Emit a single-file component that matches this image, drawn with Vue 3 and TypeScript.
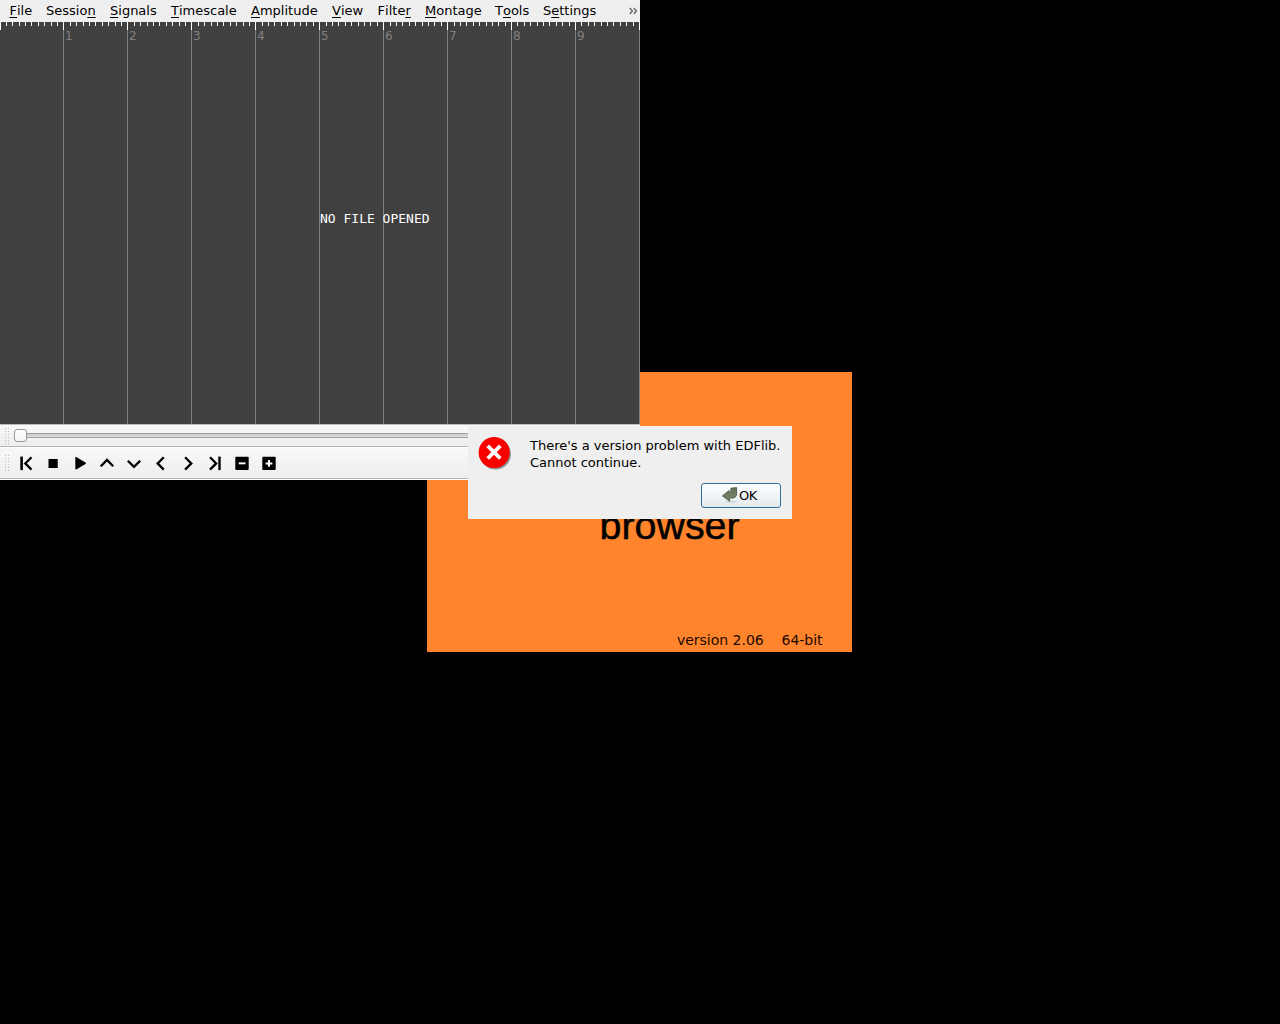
<script setup lang="ts">
interface MenuEntry {
  before: string
  key: string
  after: string
  width: number
}

const menus: MenuEntry[] = [
  { before: '', key: 'F', after: 'ile', width: 36.5 },
  { before: 'Sessio', key: 'n', after: '', width: 64 },
  { before: '', key: 'S', after: 'ignals', width: 61 },
  { before: '', key: 'T', after: 'imescale', width: 80 },
  { before: '', key: 'A', after: 'mplitude', width: 81 },
  { before: '', key: 'V', after: 'iew', width: 45.6 },
  { before: 'Filte', key: 'r', after: '', width: 47.4 },
  { before: '', key: 'M', after: 'ontage', width: 70 },
  { before: 'T', key: 'o', after: 'ols', width: 48 },
  { before: 'S', key: 'e', after: 'ttings', width: 60 },
]

const ticks = Array.from({ length: 101 }, (_, i) => ({
  x: Math.floor(i * 6.395),
  major: i % 10 === 0,
}))
const seconds = Array.from({ length: 9 }, (_, i) => i + 1)

const chevrons = [
  { name: 'up', d: 'M100.8 19.1l6.2-6.2 6.2 6.2' },
  { name: 'down', d: 'M127.8 13.6l6.2 6.2 6.2-6.2' },
  { name: 'previous', d: 'M163.8 10.1l-6.2 6.2 6.2 6.2' },
  { name: 'next', d: 'M185.1 10.1l6.2 6.2-6.2 6.2' },
]
</script>

<template>
  <main class="desktop">
    <section class="splash">
      <div class="brand">browser</div>
      <footer class="version"><span>version 2.06</span><span>64-bit</span></footer>
    </section>

    <section class="window">
      <nav class="menubar">
        <span v-for="m in menus" :key="m.key + m.after" class="menu" :style="{ width: m.width + 'px' }">{{ m.before }}<u>{{ m.key }}</u>{{ m.after }}</span>
        <svg class="more" width="9" height="17" viewBox="0 0 9 17">
          <path d="M.8 6l2.6 3-2.6 3M4.8 6l2.6 3-2.6 3" />
        </svg>
      </nav>

      <svg class="canvas" width="640" height="402" viewBox="0 0 640 402" shape-rendering="crispEdges">
        <rect width="640" height="402" fill="#404040" />
        <rect v-for="s in 10" :key="'g' + s" :x="s * 64 - 1" y="0" width="1" height="402" fill="#808080" />
        <rect v-for="t in ticks" :key="t.x" :x="t.x" y="0" width="1" :height="t.major ? 8 : 4" fill="#fff" />
        <text v-for="s in seconds" :key="s" class="second" :x="s * 64 + 1" y="18">{{ s }}</text>
        <text class="notice" x="320" y="201">NO FILE OPENED</text>
      </svg>

      <div class="toolbar position">
        <i class="grip"></i>
        <div class="slider"><b class="knob"></b></div>
      </div>
      <div class="toolbar playback">
        <i class="grip"></i>
        <svg class="controls" width="300" height="30" viewBox="0 0 300 30">
          <g transform="translate(0 -.9)">
            <rect x="20.3" y="9.5" width="2.6" height="13.5" />
            <path class="stroke" d="M31.5 10.1l-6.2 6.2 6.2 6.2" />
            <rect x="48.5" y="11.9" width="9.2" height="9" />
            <path d="M75.3 10.1l1-.1 9.6 5.7v1l-9.6 5.7-1-.2z" />
            <path v-for="c in chevrons" :key="c.name" class="stroke" :d="c.d" />
            <path class="stroke" d="M210 10.1l6.2 6.2-6.2 6.2" />
            <rect x="218.3" y="9.5" width="2.4" height="13.5" />
            <rect x="235.3" y="9.6" width="13.4" height="13.4" rx="1" />
            <rect x="238.7" y="15.3" width="6.8" height="1.9" fill="#fff" />
            <rect x="262.3" y="9.6" width="13.4" height="13.4" rx="1" />
            <path d="M268 12.9h2v2.4h2.4v2H270v2.4h-2v-2.4h-2.4v-2h2.4z" fill="#fff" />
          </g>
        </svg>
      </div>
    </section>

    <section class="dialog">
      <svg class="critical" width="36" height="36" viewBox="0 0 36 36">
        <circle cx="17.6" cy="17.2" r="15.4" fill="#8c9494" />
        <circle cx="16.2" cy="15.5" r="15.6" fill="#f80000" />
        <path d="M9.7 8.9l12.6 12.6M22.3 8.9L9.7 21.5" stroke="#fff" stroke-width="3.8" />
      </svg>
      <p class="message">There's a version problem with EDFlib.<br />Cannot continue.</p>
      <button class="ok">
        <svg width="17" height="17" viewBox="0 0 17 17">
          <defs>
            <linearGradient id="arrow" x1="0" y1="0" x2="0" y2="1">
              <stop offset="0" stop-color="#65735c" />
              <stop offset="1" stop-color="#748568" />
            </linearGradient>
          </defs>
          <ellipse cx="9" cy="14.6" rx="6" ry="1" fill="#cbd0cc" />
          <path d="M8.9 1.2l5.7-.6v6.2c0 2.8-1.7 4.3-4.7 4.3H7.2l.3 3L.4 8.9l6.8-5.4v2.4c1.2 0 1.7-.5 1.7-1.6z" fill="url(#arrow)" stroke="#424b3e" stroke-width=".8" />
        </svg>
        <span>OK</span>
      </button>
    </section>
  </main>
</template>

<style>
body {
  background: #000;
}
</style>

<style scoped>
.desktop {
  position: relative;
  width: 1280px;
  height: 1024px;
  overflow: hidden;
  background: #000;
  color: #000;
  font: 13px/17px "DejaVu Sans", sans-serif;
}
.splash {
  position: absolute;
  left: 427px;
  top: 372px;
  width: 425px;
  height: 280px;
  background: #ff842b;
  display: flex;
  flex-direction: column;
  justify-content: space-between;
  box-sizing: border-box;
  padding: 130px 29px 3px 172.5px;
}
.brand {
  font: 39.4px/46px "Liberation Sans", Arial, sans-serif;
  -webkit-text-stroke: 0.5px #000;
}
.version {
  display: flex;
  justify-content: flex-end;
  gap: 17.7px;
  margin-right: 0.4px;
  font-size: 14px;
  line-height: 18px;
  color: #1c0800;
}
.window {
  position: absolute;
  left: 0;
  top: 0;
  width: 640px;
  height: 480px;
  background: #efefef;
}
.menubar {
  display: flex;
  height: 22px;
  box-sizing: border-box;
  padding: 2px 2px 0 9.5px;
  white-space: nowrap;
  font-kerning: none;
}
.menu {
  flex: none;
}
.menu u {
  text-underline-offset: 2px;
  text-decoration-thickness: 1px;
  text-decoration-skip-ink: none;
}
.more {
  margin-left: auto;
  fill: none;
  stroke: #666;
  stroke-width: 1.4;
}
.canvas {
  display: block;
}
.second {
  font: 12px "DejaVu Sans", sans-serif;
  fill: #808080;
}
.notice {
  font: 13px "DejaVu Sans Mono", monospace;
  fill: #fff;
}
.toolbar {
  display: flex;
  align-items: center;
  box-sizing: border-box;
  border-bottom: 1px solid #b4b4b4;
  background: linear-gradient(#f8f8f8, #eee);
}
.position {
  height: 23px;
  border-top: 1px solid #bbb;
}
.playback {
  height: 32px;
  border-top: 1px solid #fff;
  box-shadow: 0 1px #fff;
}
.grip {
  flex: none;
  width: 5px;
  height: 16px;
  margin: 0 0 0 5px;
  background: radial-gradient(circle at 0.5px 0.5px, #bbb 0.6px, transparent 0.7px) 0 0 / 3px 3px;
}
.slider {
  display: flex;
  align-items: center;
  flex: 1;
  height: 5px;
  box-sizing: border-box;
  margin: 0 9px 0 4px;
  border: 1px solid #a0a0a0;
  border-radius: 2px;
  background: linear-gradient(#c8c8c8, #e2e2e2);
}
.knob {
  width: 13px;
  height: 13px;
  box-sizing: border-box;
  margin-left: -1px;
  border: 1px solid #999;
  border-radius: 3px;
  background: linear-gradient(#fff, #f5f5f5);
}
.controls {
  flex: none;
  margin-left: -10px;
}
.stroke {
  fill: none;
  stroke: #000;
  stroke-width: 2.3;
}
.dialog {
  position: absolute;
  left: 468px;
  top: 426px;
  width: 324px;
  height: 93px;
  box-sizing: border-box;
  padding: 11px 11px 11px 10px;
  background: #efefef;
  display: grid;
  grid-template-columns: 52px 1fr;
  grid-template-rows: 46px 25px;
}
.critical {
  overflow: visible;
}
.message {
  margin: 0;
  white-space: nowrap;
}
.ok {
  grid-column: 2;
  justify-self: end;
  display: flex;
  align-items: center;
  justify-content: center;
  width: 80px;
  height: 25px;
  box-sizing: border-box;
  padding: 0 3px 0 0;
  border: 1px solid #30719b;
  border-radius: 3px;
  background: linear-gradient(#fff, #e2eaee);
  color: #000;
  font: 13px/17px "DejaVu Sans", sans-serif;
}
.ok span {
  letter-spacing: -0.3px;
}
</style>
